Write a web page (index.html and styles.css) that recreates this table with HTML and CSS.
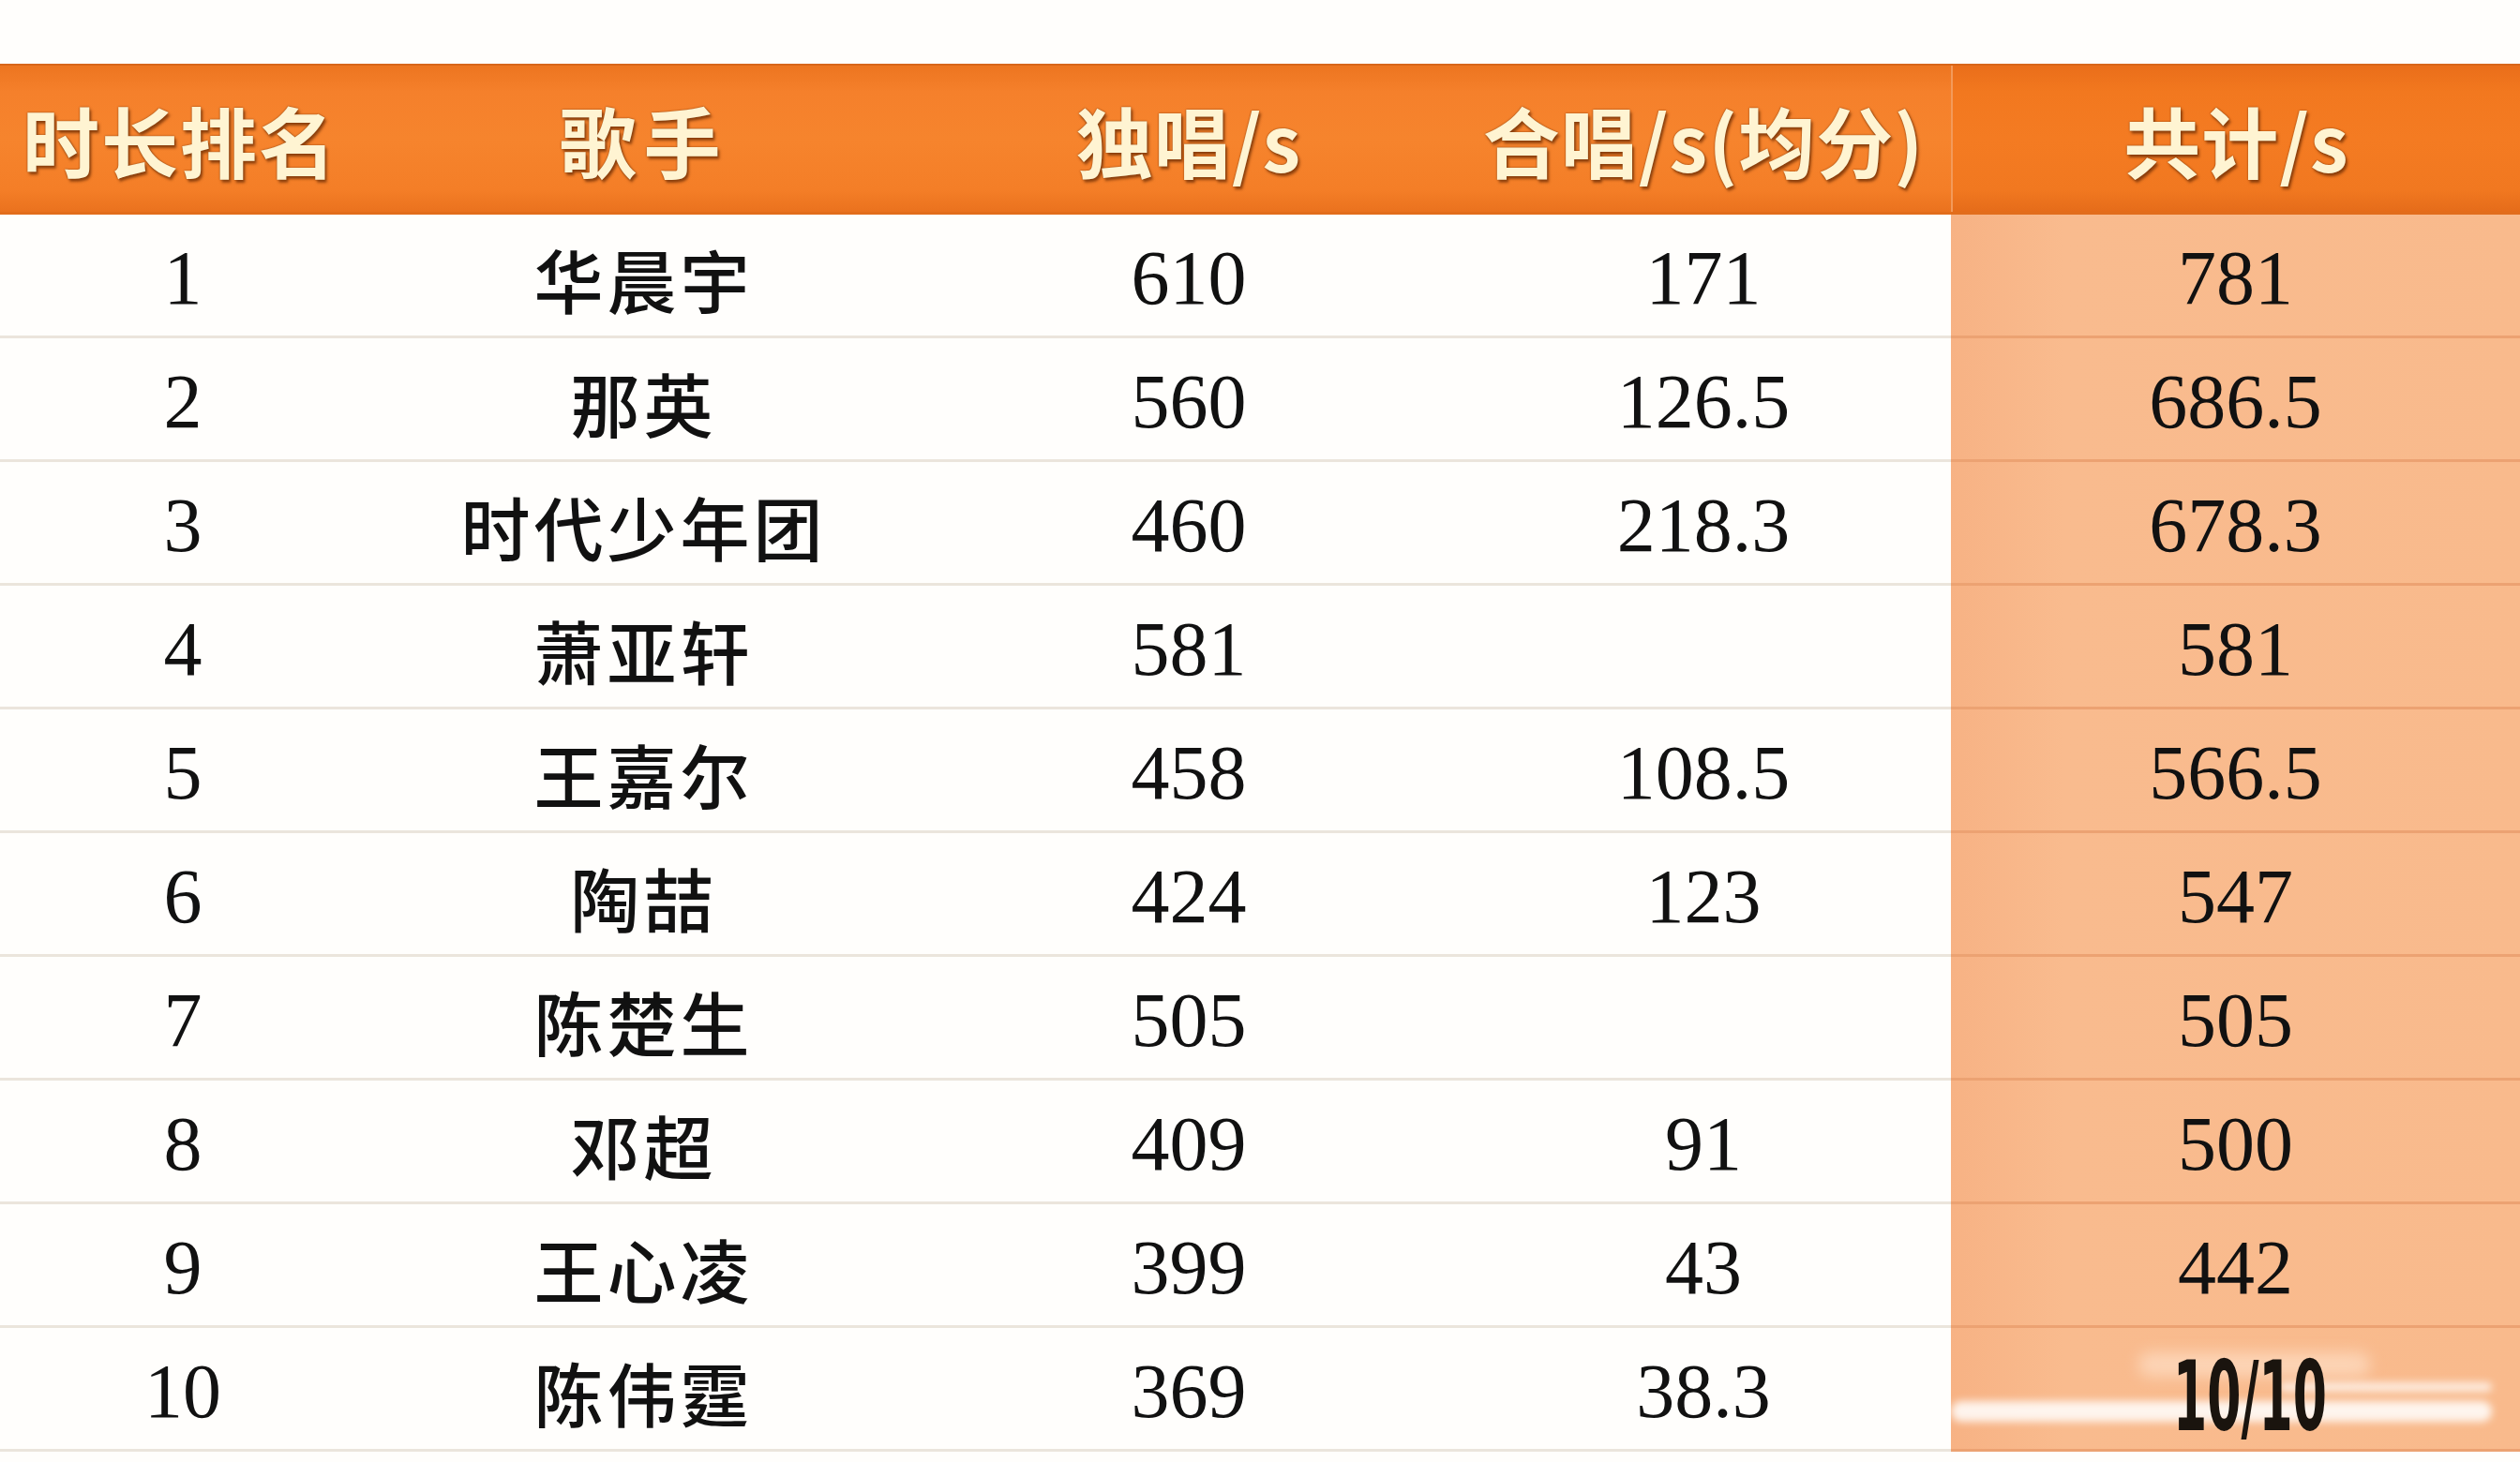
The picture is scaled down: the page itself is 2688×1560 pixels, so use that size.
FILE: index.html
```html
<!DOCTYPE html>
<html lang="zh-CN">
<head>
<meta charset="utf-8">
<title>时长排名</title>
<link rel="stylesheet" href="styles.css">
</head>
<body>
<div class="page">
  <div class="table">
    <div class="row head">
      <div class="c c1">时长排名</div>
      <div class="c c2">歌手</div>
      <div class="c c3">独唱/s</div>
      <div class="c c4">合唱/s(均分)</div>
      <div class="c c5">共计/s</div>
    </div>
    <div class="row"><div class="c num">1</div><div class="c name">华晨宇</div><div class="c num">610</div><div class="c num">171</div><div class="c num total">781</div></div>
    <div class="row"><div class="c num">2</div><div class="c name">那英</div><div class="c num">560</div><div class="c num">126.5</div><div class="c num total">686.5</div></div>
    <div class="row"><div class="c num">3</div><div class="c name">时代少年团</div><div class="c num">460</div><div class="c num">218.3</div><div class="c num total">678.3</div></div>
    <div class="row"><div class="c num">4</div><div class="c name">萧亚轩</div><div class="c num">581</div><div class="c num"></div><div class="c num total">581</div></div>
    <div class="row"><div class="c num">5</div><div class="c name">王嘉尔</div><div class="c num">458</div><div class="c num">108.5</div><div class="c num total">566.5</div></div>
    <div class="row"><div class="c num">6</div><div class="c name">陶喆</div><div class="c num">424</div><div class="c num">123</div><div class="c num total">547</div></div>
    <div class="row"><div class="c num">7</div><div class="c name">陈楚生</div><div class="c num">505</div><div class="c num"></div><div class="c num total">505</div></div>
    <div class="row"><div class="c num">8</div><div class="c name">邓超</div><div class="c num">409</div><div class="c num">91</div><div class="c num total">500</div></div>
    <div class="row"><div class="c num">9</div><div class="c name">王心凌</div><div class="c num">399</div><div class="c num">43</div><div class="c num total">442</div></div>
    <div class="row last"><div class="c num">10</div><div class="c name">陈伟霆</div><div class="c num">369</div><div class="c num">38.3</div><div class="c num total wm-cell">
      <div class="wm">
        <span class="wm-bar b1"></span>
        <span class="wm-bar b2"></span>
        <span class="wm-bar b3"></span>
        <span class="wm-text">10/10</span>
      </div>
    </div></div>
  </div>
</div>
</body>
</html>
```

FILE: styles.css
```css
html, body {
  margin: 0;
  padding: 0;
  background: #ffffff;
}

.page {
  width: 2688px;
  height: 1560px;
  overflow: hidden;
  padding-top: 68px;
  box-sizing: border-box;
  background: #fffefc;
}

.table {
  display: flex;
  flex-direction: column;
}

.row {
  display: grid;
  grid-template-columns: 390px 593px 570px 528px 1fr;
  height: 132px;
  box-sizing: border-box;
  border-bottom: 3px solid #ebe5dc;
}

.row .c {
  display: flex;
  align-items: center;
  justify-content: center;
  padding-top: 6px;
  box-sizing: border-box;
}

.row .total {
  background: linear-gradient(to right, #f7b284 0%, #f9bb8e 20%, #f9ba8c 100%);
  margin-bottom: -3px;
  border-bottom: 3px solid #eca272;
}

.row.head {
  height: 161px;
  border-top: 2px solid #d8661a;
  border-bottom: 3px solid #e26d1c;
  background: linear-gradient(to bottom, #ed7520 0%, #f5802b 18%, #f6842d 50%, #f47e27 85%, #ea721e 100%);
}

.row.head .c {
  padding-top: 0;
  font-family: "Noto Sans CJK SC", "Noto Sans", sans-serif;
  font-weight: 700;
  font-size: 82px;
  color: #fff4d2;
  text-shadow: 0 0 2px #7a3608, 2px 3px 3px rgba(110, 45, 5, 0.75);
  letter-spacing: 1px;
}

.row.head .c1 {
  justify-content: flex-start;
  padding-left: 24px;
  letter-spacing: 2px;
}

.row.head .c2 {
  letter-spacing: 8px;
}

.row.head .c5 {
  border-left: 2px solid #f39a5a;
  background: linear-gradient(to bottom, #ea6e1a 0%, #f2781f 18%, #f47b22 50%, #f17820 85%, #e56c1a 100%);
}

.num {
  font-family: "Liberation Serif", "Times New Roman", serif;
  font-size: 82px;
  color: #111111;
}

.name {
  font-family: "Noto Sans CJK SC", "Noto Sans CJK JP", sans-serif;
  font-weight: 500;
  font-size: 74px;
  letter-spacing: 4px;
  color: #111111;
}

.row.last {
  border-bottom: 3px solid #ebe5dc;
}

.wm-cell {
  position: relative;
}

.wm {
  position: absolute;
  inset: 0;
}

.wm-bar {
  position: absolute;
  display: block;
  background: rgba(255, 255, 255, 0.85);
  filter: blur(4px);
  border-radius: 12px;
}

.wm-bar.b1 {
  left: 0;
  right: 30px;
  top: 78px;
  height: 22px;
}

.wm-bar.b2 {
  left: 350px;
  right: 30px;
  top: 58px;
  height: 10px;
  background: rgba(255, 255, 255, 0.75);
}

.wm-bar.b3 {
  left: 200px;
  right: 160px;
  top: 26px;
  height: 26px;
  background: rgba(255, 230, 210, 0.6);
  filter: blur(8px);
}

.wm-text {
  position: absolute;
  left: 237px;
  top: 28px;
  font-family: "DejaVu Sans", sans-serif;
  font-weight: 700;
  font-size: 84px;
  line-height: 0.9;
  color: #1a140e;
  transform: scale(0.62, 1.22);
  transform-origin: left top;
}
```
